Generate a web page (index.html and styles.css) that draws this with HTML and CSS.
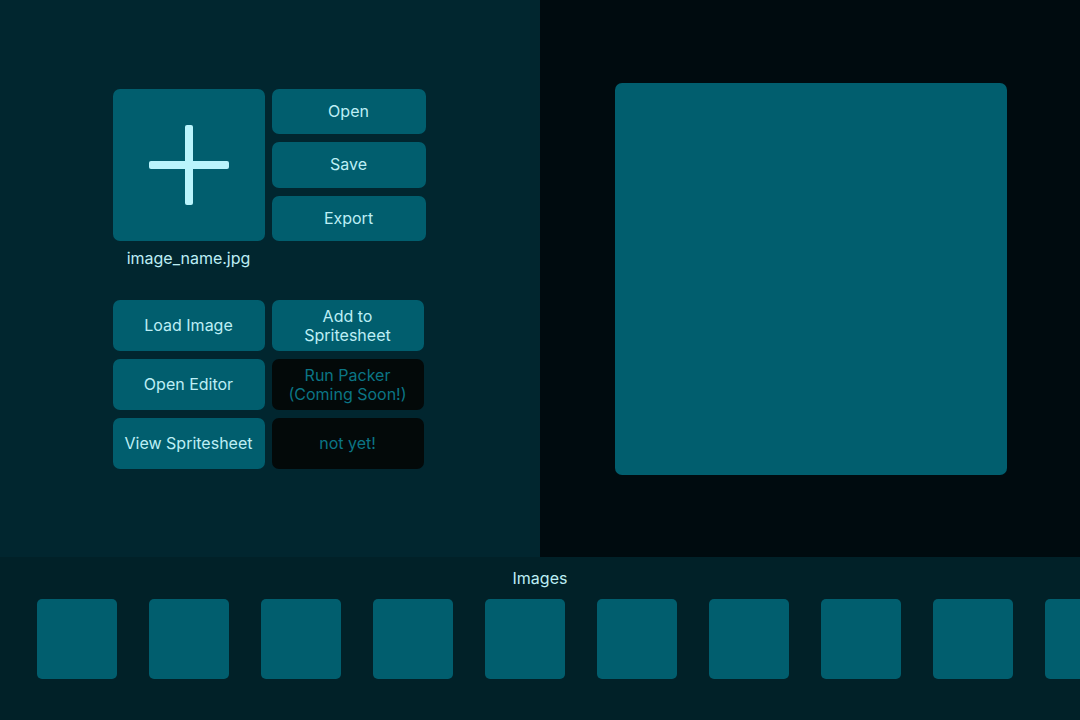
FILE: index.html
```html
<!DOCTYPE html>
<html>
<head>
<meta charset="utf-8">
<link rel="stylesheet" href="styles.css">
</head>
<body>
<div class="app">
  <div class="main">
    <section class="left">
      <div class="controls">
        <div class="top">
          <div class="tile-col">
            <div class="tile">
              <svg width="80" height="80" viewBox="0 0 80 80">
                <rect x="36" y="0" width="8" height="80" rx="2" fill="#b9f4fc"/>
                <rect x="0" y="36" width="80" height="8" rx="2" fill="#b9f4fc"/>
              </svg>
            </div>
            <div class="fname">image_name.jpg</div>
          </div>
          <div class="file-btns">
            <button class="btn">Open</button>
            <button class="btn">Save</button>
            <button class="btn">Export</button>
          </div>
        </div>
        <div class="grid">
          <button class="btn">Load Image</button>
          <button class="btn">Add to<br>Spritesheet</button>
          <button class="btn">Open Editor</button>
          <button class="btn disabled">Run Packer<br>(Coming Soon!)</button>
          <button class="btn">View Spritesheet</button>
          <button class="btn disabled">not yet!</button>
        </div>
      </div>
    </section>
    <section class="right">
      <div class="preview"></div>
    </section>
  </div>
  <footer class="images">
    <div class="images-title">Images</div>
    <div class="thumbs">
      <div class="thumb"></div><div class="thumb"></div><div class="thumb"></div><div class="thumb"></div><div class="thumb"></div><div class="thumb"></div><div class="thumb"></div><div class="thumb"></div><div class="thumb"></div><div class="thumb"></div>
    </div>
  </footer>
</div>
</body>
</html>
```

FILE: styles.css
```css
* { box-sizing: border-box; }
html, body { margin: 0; padding: 0; }
body {
  width: 1080px;
  height: 720px;
  overflow: hidden;
  font-family: Inter, "Noto Sans", sans-serif;
  font-size: 16px;
  color: #bdeef5;
  background: #000b0f;
}
.app { display: flex; flex-direction: column; height: 720px; }
.main { display: flex; height: 557px; }
.left {
  width: 540px;
  background: #01262f;
  display: flex;
  align-items: center;
  justify-content: center;
}
.right {
  width: 540px;
  background: #000b0f;
  display: flex;
  align-items: center;
  justify-content: center;
}
.preview {
  width: 392px;
  height: 392px;
  background: #015e6e;
  border-radius: 7px;
  margin-left: 2px;
  margin-top: 1px;
}
.controls { display: flex; flex-direction: column; margin-top: 1px; margin-right: 2px; }
.top { display: flex; gap: 7px; }
.tile-col { display: flex; flex-direction: column; align-items: center; }
.tile {
  width: 152px;
  height: 152px;
  background: #015e6e;
  border-radius: 7px;
  display: flex;
  align-items: center;
  justify-content: center;
}
.fname { margin-top: 7px; line-height: 20px; height: 20px; }
.file-btns { display: flex; flex-direction: column; gap: 8px; width: 154px; height: 152px; }
.file-btns .btn { flex: 1; }
.btn {
  border: 0;
  margin: 0;
  padding: 0;
  font: inherit;
  color: #bdeef5;
  background: #015e6e;
  border-radius: 7px;
  line-height: 19px;
  text-align: center;
}
.btn.disabled { background: #030909; color: #0b7585; }
.grid {
  margin-top: 32px;
  display: grid;
  grid-template-columns: 152px 152px;
  grid-auto-rows: 51px;
  column-gap: 7px;
  row-gap: 8px;
}
.images {
  height: 163px;
  background: #012128;
  padding-top: 11px;
}
.images-title { text-align: center; line-height: 20px; height: 20px; }
.thumbs {
  margin-top: 11px;
  display: flex;
  gap: 32px;
  padding-left: 37px;
  overflow: hidden;
}
.thumb {
  flex: none;
  width: 80px;
  height: 80px;
  background: #015e6e;
  border-radius: 5px;
}
```
